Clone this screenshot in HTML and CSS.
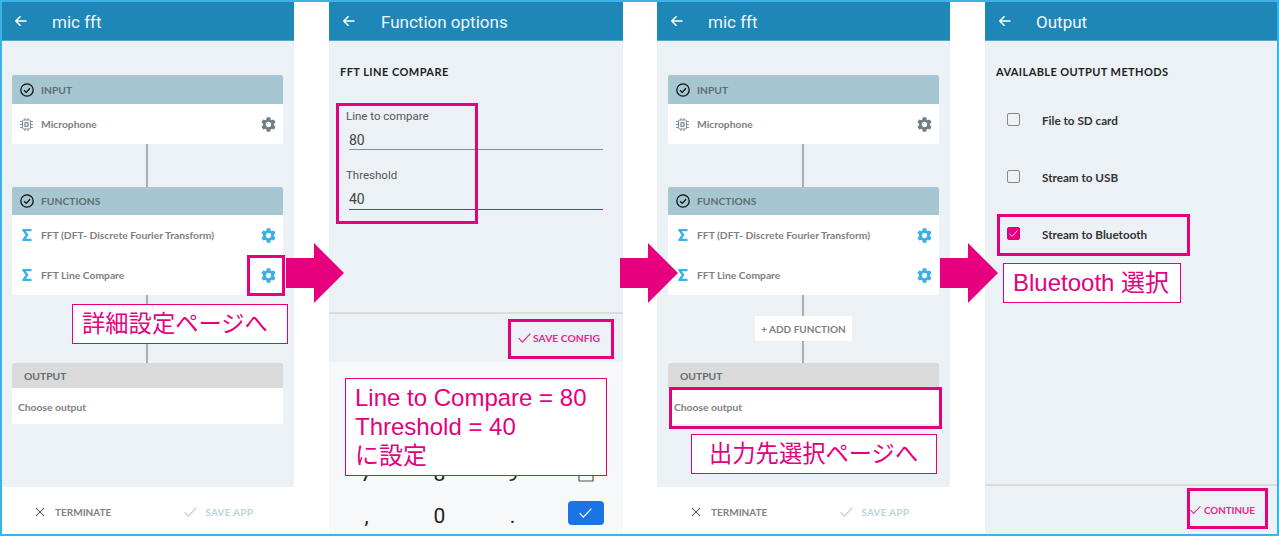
FILE: index.html
```html
<!DOCTYPE html>
<html>
<head>
    <meta charset="utf-8" />
    <title>mic fft</title>
    <link rel="stylesheet" href="styles.css">
</head>
<body>
    <svg class="defs" width="0" height="0">
        <symbol id="i-back" viewBox="0 0 12 12"><path d="M11.5 6H1M5.5 1.3 .9 6l4.6 4.7" fill="none" stroke="currentColor" stroke-width="1.5"/></symbol>
        <symbol id="i-gear" viewBox="2 2 20 20"><path fill="currentColor" d="M19.14 12.94c.04-.3.06-.61.06-.94 0-.32-.02-.64-.07-.94l2.03-1.58c.18-.14.23-.41.12-.61l-1.92-3.32c-.12-.22-.37-.29-.59-.22l-2.39.96c-.5-.38-1.03-.7-1.62-.94l-.36-2.54c-.04-.24-.24-.41-.48-.41h-3.84c-.24 0-.43.17-.47.41l-.36 2.54c-.59.24-1.13.57-1.62.94l-2.39-.96c-.22-.08-.47 0-.59.22L2.74 8.87c-.12.21-.08.47.12.61l2.03 1.58c-.05.3-.09.63-.09.94s.02.64.07.94l-2.03 1.58c-.18.14-.23.41-.12.61l1.92 3.32c.12.22.37.29.59.22l2.39-.96c.5.38 1.03.7 1.62.94l.36 2.54c.05.24.24.41.48.41h3.84c.24 0 .44-.17.47-.41l.36-2.54c.59-.24 1.13-.56 1.62-.94l2.39.96c.22.08.47 0 .59-.22l1.92-3.32c.12-.22.07-.47-.12-.61l-2.01-1.58zM12 15.6c-1.98 0-3.6-1.62-3.6-3.6s1.62-3.6 3.6-3.6 3.6 1.62 3.6 3.6-1.62 3.6-3.6 3.6z"/></symbol>
        <symbol id="i-ok" viewBox="0 0 14 14"><circle cx="7" cy="7" r="6.2" fill="none" stroke="#111" stroke-width="1.3"/><path d="M4 7.2l2.2 2.2L10 5.2" fill="none" stroke="#111" stroke-width="1.3"/></symbol>
        <symbol id="i-chip" viewBox="0 0 13 13"><g fill="none" stroke="currentColor"><rect x="2.5" y="2" width="8" height="9" rx="1.2"/><rect x="5" y="4.7" width="3" height="3.6" stroke-width="1.2"/><path d="M0 3.5h2.5M0 6.5h2.5M0 9.5h2.5M10.5 3.5H13M10.5 6.5H13M10.5 9.5H13M5 0v2M8 0v2M5 11v2M8 11v2" stroke-width=".9"/></g></symbol>
        <symbol id="i-sigma" viewBox="0 0 10 12"><path fill="currentColor" d="M.3 0h9.2v2.2H3.9L6.6 6 3.9 9.8h5.6V12H.3v-1.6L3.6 6 .3 1.6z"/></symbol>
        <symbol id="i-x" viewBox="0 0 12 12"><path d="M1 1l10 10M11 1 1 11" fill="none" stroke="currentColor" stroke-width="1.3"/></symbol>
        <symbol id="i-check" viewBox="0 0 13 10"><path d="M.7 5.2l3.6 3.9L12.4.6" fill="none" stroke="currentColor" stroke-width="1.2"/></symbol>
    </svg>

    <div class="frame">
        <div class="phone phone-1">
            <div class="head"><svg class="back"><use href="#i-back"/></svg><span class="title">mic fft</span></div>
            <div class="flow">
                <div class="card">
                    <div class="card-head"><svg class="ok"><use href="#i-ok"/></svg>INPUT</div>
                    <div class="row"><svg class="chip"><use href="#i-chip"/></svg><span class="row-name">Microphone</span><svg class="gear"><use href="#i-gear"/></svg></div>
                </div>
                <div class="link link-tall"></div>
                <div class="card">
                    <div class="card-head short"><svg class="ok"><use href="#i-ok"/></svg>FUNCTIONS</div>
                    <div class="row"><svg class="sigma"><use href="#i-sigma"/></svg><span class="row-name">FFT (DFT- Discrete Fourier Transform)</span><svg class="gear blue"><use href="#i-gear"/></svg></div>
                    <div class="row"><svg class="sigma"><use href="#i-sigma"/></svg><span class="row-name">FFT Line Compare</span><svg class="gear blue"><use href="#i-gear"/></svg></div>
                </div>
                <div class="link link-long"></div>
                <div class="card">
                    <div class="card-head off">OUTPUT</div>
                    <div class="row-out">Choose output</div>
                </div>
            </div>
            <div class="foot">
                <span class="foot-btn"><svg class="x"><use href="#i-x"/></svg>TERMINATE</span>
                <span class="foot-btn save"><svg class="chk"><use href="#i-check"/></svg>SAVE APP</span>
            </div>
        </div>

        <div class="phone phone-2">
            <div class="head"><svg class="back"><use href="#i-back"/></svg><span class="title">Function options</span></div>
            <div class="opts">
                <div class="sect">FFT LINE COMPARE</div>
                <div class="field">
                    <div class="field-label">Line to compare</div>
                    <div class="field-val">80</div>
                </div>
                <div class="field active">
                    <div class="field-label">Threshold</div>
                    <div class="field-val">40</div>
                </div>
            </div>
            <div class="opts-foot"><span class="pink-btn"><svg class="chk"><use href="#i-check"/></svg>SAVE CONFIG</span></div>
            <div class="keys">
                <span class="key">7</span><span class="key">8</span><span class="key">9</span>
                <svg class="bksp" viewBox="0 0 16 12"><path d="M1 1h14v10H1z" fill="none" stroke="#555" stroke-width="1.2"/></svg>
                <span class="key">,</span><span class="key">0</span><span class="key">.</span>
                <span class="key-ok"><svg class="chk"><use href="#i-check"/></svg></span>
            </div>
        </div>

        <div class="phone phone-3">
            <div class="head"><svg class="back"><use href="#i-back"/></svg><span class="title">mic fft</span></div>
            <div class="flow">
                <div class="card">
                    <div class="card-head"><svg class="ok"><use href="#i-ok"/></svg>INPUT</div>
                    <div class="row"><svg class="chip"><use href="#i-chip"/></svg><span class="row-name">Microphone</span><svg class="gear"><use href="#i-gear"/></svg></div>
                </div>
                <div class="link link-tall"></div>
                <div class="card">
                    <div class="card-head short"><svg class="ok"><use href="#i-ok"/></svg>FUNCTIONS</div>
                    <div class="row"><svg class="sigma"><use href="#i-sigma"/></svg><span class="row-name">FFT (DFT- Discrete Fourier Transform)</span><svg class="gear blue"><use href="#i-gear"/></svg></div>
                    <div class="row"><svg class="sigma"><use href="#i-sigma"/></svg><span class="row-name">FFT Line Compare</span><svg class="gear blue"><use href="#i-gear"/></svg></div>
                </div>
                <div class="link link-short"></div>
                <div class="add-fn">+ ADD FUNCTION</div>
                <div class="link link-short2"></div>
                <div class="card">
                    <div class="card-head off">OUTPUT</div>
                    <div class="row-out">Choose output</div>
                </div>
            </div>
            <div class="foot">
                <span class="foot-btn"><svg class="x"><use href="#i-x"/></svg>TERMINATE</span>
                <span class="foot-btn save"><svg class="chk"><use href="#i-check"/></svg>SAVE APP</span>
            </div>
        </div>

        <div class="phone phone-4">
            <div class="head"><svg class="back"><use href="#i-back"/></svg><span class="title">Output</span></div>
            <div class="methods">
                <div class="sect">AVAILABLE OUTPUT METHODS</div>
                <div class="method"><span class="box"></span>File to SD card</div>
                <div class="method"><span class="box"></span>Stream to USB</div>
                <div class="method"><span class="box on"><svg class="chk"><use href="#i-check"/></svg></span>Stream to Bluetooth</div>
            </div>
            <div class="methods-foot"><span class="pink-btn"><svg class="chk"><use href="#i-check"/></svg>CONTINUE</span></div>
        </div>

        <!-- annotations drawn on top of the screens -->
        <div class="mark m-gear"></div>
        <div class="mark m-fields"></div>
        <div class="mark m-save"></div>
        <div class="mark m-output"></div>
        <div class="mark m-bt"></div>
        <div class="mark m-continue"></div>

        <div class="arrow a-1"></div>
        <div class="arrow a-2"></div>
        <div class="arrow a-3"></div>

        <div class="note n-1">詳細設定ページへ</div>
        <div class="note n-2">Line to Compare = 80<br>Threshold = 40<br>に設定</div>
        <div class="note n-3">出力先選択ページへ</div>
        <div class="note n-4">Bluetooth 選択</div>
    </div>
</body>
</html>
```

FILE: styles.css
```css
html, body {
    margin: 0;
    background-color: #fff;
}

.defs {
    position: absolute;
}

.frame {
    position: relative;
    box-sizing: border-box;
    width: 1279px;
    height: 536px;
    border: 2px solid #3cb2e6;
    display: flex;
    overflow: hidden;
    font-family: Lato, "Noto Sans", sans-serif;
    background-color: #fff;
}

.phone {
    display: flex;
    flex-direction: column;
    height: 532px;
    flex: none;
}

.phone-1 { width: 292px; margin-right: 35px; }
.phone-2 { width: 294px; margin-right: 34px; }
.phone-3 { width: 293px; margin-right: 35px; }
.phone-4 { width: 292px; }

/* header */
.head {
    display: flex;
    align-items: center;
    flex: none;
    height: 38px;
    background-color: #1f87b7;
    border-bottom: 1px solid #58a7cb;
    color: #eef6fa;
    font-family: Roboto, sans-serif;
    font-size: 17px;
}

.title {
    padding-top: 2px;
}

.back {
    width: 12px;
    height: 12px;
    margin: 0 25px 0 13px;
    color: #fff;
    flex: none;
}

.phone-2 .back { margin: 0 26px 0 14px; }
.phone-3 .back { margin: 0 25px 0 14px; }
.phone-4 .back { margin: 0 25px 0 14px; }

/* flow screen */
.flow {
    flex: 1;
    box-sizing: border-box;
    padding: 34px 0 0 10px;
    background-color: #ecf1f5;
    display: flex;
    flex-direction: column;
    align-items: flex-start;
}

.phone-3 .flow { padding-left: 11px; }

.card {
    width: 271px;
    background-color: #fff;
    border-radius: 2px;
    overflow: hidden;
}

.card-head {
    display: flex;
    align-items: center;
    height: 29px;
    background-color: #a6c6d1;
    color: #5f6d74;
    font-size: 10.3px;
    font-weight: 700;
}

.card-head.short {
    height: 28px;
}

.card-head.off {
    height: 25px;
    padding-left: 12px;
    background-color: #dadada;
    color: #666b6f;
}

.ok {
    width: 14px;
    height: 14px;
    margin: 0 7px 0 8px;
}

.row {
    display: flex;
    align-items: center;
    height: 40px;
}

.row-name {
    flex: 1;
    color: #808080;
    font-size: 10.3px;
    font-weight: 700;
}

.chip {
    width: 13px;
    height: 13px;
    margin: 0 8px;
    color: #7b8a90;
}

.sigma {
    width: 10px;
    height: 12px;
    margin: 0 9px 0 10px;
    color: #3cb0e6;
}

.gear {
    width: 15px;
    height: 15px;
    margin-right: 7px;
    color: #6e7f86;
}

.gear.blue {
    color: #3cb0e6;
}

.row-out {
    height: 36px;
    line-height: 38px;
    padding-left: 6px;
    color: #808080;
    font-size: 10.3px;
    font-weight: 700;
}

.link {
    width: 2px;
    margin-left: 134px;
    background-color: #a9adb0;
}

.link-tall { height: 43px; }
.link-short { height: 21px; }
.link-short2 { height: 22px; }
.link-long { height: 68px; }

.add-fn {
    width: 97px;
    height: 25px;
    margin-left: 87px;
    background-color: #fff;
    color: #808080;
    font-size: 10px;
    font-weight: 700;
    line-height: 26px;
    text-align: center;
}

/* bottom bar of flow screen */
.foot {
    display: flex;
    flex: none;
    height: 47px;
    box-sizing: border-box;
    padding-top: 3px;
    align-items: center;
    background-color: #fff;
}

.phone-3 .foot { padding-left: 1px; }

.foot-btn {
    display: flex;
    align-items: center;
    color: #808080;
    font-size: 10px;
    font-weight: 700;
}

.foot-btn.save {
    margin-left: 73px;
    color: #b9d3de;
    letter-spacing: .25px;
}

.x {
    width: 10px;
    height: 10px;
    margin: 0 10px 0 33px;
    color: #666;
}

.chk {
    width: 13px;
    height: 10px;
    margin-right: 8px;
}

.foot-btn .chk {
    color: #b9d3de;
}

/* options screen */
.opts {
    flex: none;
    height: 271px;
    box-sizing: border-box;
    padding: 25px 20px 0 20px;
    background-color: #ecf1f5;
}

.sect {
    color: #222;
    font-size: 11px;
    font-weight: 700;
    line-height: 12px;
}

.phone-2 .sect {
    margin: 0 0 0 -9px;
    letter-spacing: .45px;
}

.field {
    margin-top: 31px;
}

.field + .field {
    margin-top: 18px;
}

.field-label {
    margin-left: -3px;
    color: #555;
    font-family: Roboto, sans-serif;
    font-size: 11.5px;
    line-height: 14px;
}

.field-val {
    margin-top: 7px;
    height: 19px;
    line-height: 20px;
    border-bottom: 1px solid #8c9093;
    color: #444;
    font-family: Roboto, sans-serif;
    font-size: 14px;
}

.active .field-val {
    height: 20px;
    border-bottom-color: #e6007e;
}

.opts-foot {
    display: flex;
    justify-content: flex-end;
    align-items: center;
    flex: none;
    height: 50px;
    box-sizing: border-box;
    padding-right: 23px;
    border-top: 2px solid #dcdcdc;
    background-color: #ecf1f5;
}

.pink-btn {
    display: flex;
    align-items: center;
    color: #e8278f;
    font-size: 10.3px;
    font-weight: 700;
}

.pink-btn .chk {
    margin-right: 2px;
}

/* keypad */
.keys {
    flex: 1;
    display: grid;
    grid-template-columns: repeat(4, 73px);
    grid-auto-rows: 42px;
    align-content: end;
    justify-items: center;
    align-items: center;
    padding: 0 0 0 1px;
    background-color: #f6f8fa;
    color: #222;
    font-family: Roboto, sans-serif;
    font-size: 21px;
}

.key {
    padding-top: 6px;
}

.bksp {
    width: 16px;
    height: 12px;
    margin-top: 9px;
}

.key-ok {
    display: flex;
    align-items: center;
    justify-content: center;
    width: 36px;
    height: 24px;
    border-radius: 4px;
    background-color: #1b74e4;
    color: #fff;
}

.key-ok .chk {
    margin: 0;
}

/* output screen */
.methods {
    flex: 1;
    box-sizing: border-box;
    padding: 25px 0 0 11px;
    background-color: #ecf1f5;
}

.phone-4 .sect {
    margin-bottom: 13px;
    letter-spacing: .4px;
}

.method {
    display: flex;
    align-items: center;
    height: 57px;
    color: #333;
    font-size: 11.7px;
    font-weight: 700;
    line-height: 12px;
}

.box {
    display: flex;
    align-items: center;
    justify-content: center;
    box-sizing: border-box;
    width: 13px;
    height: 13px;
    margin: 0 22px 0 11px;
    border: 1.5px solid #888;
    border-radius: 2px;
}

.box.on {
    background-color: #e6007e;
    border-color: #e6007e;
    color: #fff;
}

.box .chk {
    width: 9px;
    height: 7px;
    margin: 0;
}

.methods-foot {
    display: flex;
    justify-content: flex-end;
    align-items: center;
    flex: none;
    height: 50px;
    box-sizing: border-box;
    padding: 0 22px 0 0;
    border-top: 2px solid #d8dcdd;
    background-color: #ecf1f5;
}

.methods-foot .pink-btn {
    font-size: 9.8px;
}

.methods-foot .chk {
    width: 11px;
    height: 10px;
    margin-right: 3px;
}

/* annotations */
.mark {
    position: absolute;
    box-sizing: border-box;
    border: 3px solid #e6007e;
}

.m-gear { left: 245px; top: 253px; width: 38px; height: 41px; }
.m-fields { left: 334px; top: 101px; width: 142px; height: 121px; }
.m-save { left: 506px; top: 317px; width: 106px; height: 40px; }
.m-output { left: 667px; top: 385px; width: 273px; height: 42px; }
.m-bt { left: 995px; top: 212px; width: 193px; height: 42px; }
.m-continue { left: 1185px; top: 486px; width: 81px; height: 41px; }

.arrow {
    position: absolute;
    top: 241px;
    width: 58px;
    height: 60px;
    background-color: #e6007e;
    clip-path: polygon(0 15px, 28px 15px, 28px 0, 58px 30px, 28px 60px, 28px 45px, 0 45px);
}

.a-1 { left: 284px; }
.a-2 { left: 618px; }
.a-3 { left: 938px; }

.note {
    position: absolute;
    box-sizing: border-box;
    border: 1px solid #e6007e;
    background-color: #fff;
    color: #e6007e;
    font-family: "Liberation Sans", "Noto Sans CJK JP", sans-serif;
    font-size: 23.3px;
    white-space: nowrap;
}

.n-1 { left: 70px; top: 302px; width: 216px; height: 40px; padding-left: 9px; line-height: 38px; }
.n-2 { left: 343px; top: 376px; width: 262px; height: 98px; padding: 4px 0 0 9px; font-size: 24px; line-height: 29px; }
.n-3 { left: 689px; top: 432px; width: 246px; height: 40px; padding-left: 17px; line-height: 38px; }
.n-4 { left: 1001px; top: 261px; width: 178px; height: 40px; padding-left: 9px; font-size: 24px; line-height: 38px; }
```
